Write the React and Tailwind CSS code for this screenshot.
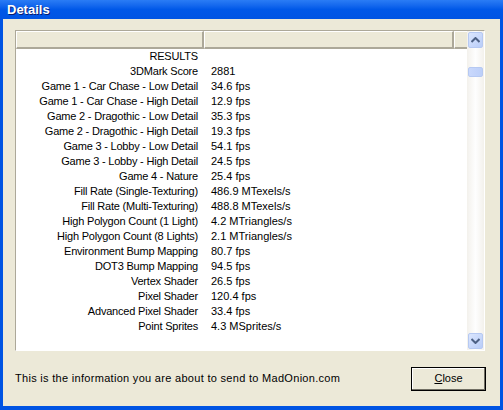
import React from "react";

const rows = [
  ["RESULTS", ""],
  ["3DMark Score", "2881"],
  ["Game 1 - Car Chase - Low Detail", "34.6 fps"],
  ["Game 1 - Car Chase - High Detail", "12.9 fps"],
  ["Game 2 - Dragothic - Low Detail", "35.3 fps"],
  ["Game 2 - Dragothic - High Detail", "19.3 fps"],
  ["Game 3 - Lobby - Low Detail", "54.1 fps"],
  ["Game 3 - Lobby - High Detail", "24.5 fps"],
  ["Game 4 - Nature", "25.4 fps"],
  ["Fill Rate (Single-Texturing)", "486.9 MTexels/s"],
  ["Fill Rate (Multi-Texturing)", "488.8 MTexels/s"],
  ["High Polygon Count (1 Light)", "4.2 MTriangles/s"],
  ["High Polygon Count (8 Lights)", "2.1 MTriangles/s"],
  ["Environment Bump Mapping", "80.7 fps"],
  ["DOT3 Bump Mapping", "94.5 fps"],
  ["Vertex Shader", "26.5 fps"],
  ["Pixel Shader", "120.4 fps"],
  ["Advanced Pixel Shader", "33.4 fps"],
  ["Point Sprites", "4.3 MSprites/s"],
];

function Arrow({ up }) {
  return (
    <svg width="9" height="6" viewBox="0 0 9 6">
      <path
        d={up ? "M0.5 5 L4.5 1 L8.5 5" : "M0.5 1 L4.5 5 L8.5 1"}
        fill="none"
        stroke="#4d6185"
        strokeWidth="2"
      />
    </svg>
  );
}

function ScrollBtn({ up }) {
  return (
    <div className="w-[15px] h-[16px] mx-auto rounded-[2px] border border-[#b6c9f2] bg-gradient-to-br from-[#dbe6fe] to-[#b9cdf8] flex items-center justify-center">
      <Arrow up={up} />
    </div>
  );
}

export default function App() {
  return (
    <div
      className="w-[503px] h-[410px] flex flex-col bg-[#0054e3] text-[11px] text-black"
      style={{ fontFamily: '"Liberation Sans", Arial, sans-serif' }}
    >
      <div className="h-[19px] shrink-0 flex items-center px-[7px] bg-gradient-to-b from-[#2a7cf5] via-[#0058e8] to-[#0054e3]">
        <span className="text-white font-bold text-[13px] [text-shadow:1px_1px_0_#0a1e6e]">
          Details
        </span>
      </div>
      <div className="flex-1 mx-[3px] mb-[4px] bg-[#ece9d8] flex flex-col pl-[12px] pt-[11px] pr-[15px]">
        <div className="w-[470px] h-[321px] border-t border-l border-[#aca899] border-r border-b border-r-white border-b-white flex">
          <div className="flex-1 flex flex-col bg-white min-w-0">
            <div className="h-[18px] flex bg-[#ece9d8] shrink-0">
              <div className="w-[188px] border-t border-l border-white border-r-2 border-b-2 border-r-[#aca899] border-b-[#aca899]" />
              <div className="w-[250px] border-t border-l border-white border-r-2 border-b-2 border-r-[#aca899] border-b-[#aca899]" />
              <div className="flex-1 border-t border-l border-white border-b-2 border-b-[#aca899]" />
            </div>
            <div className="flex flex-col">
              {rows.map(([k, v], i) => (
                <div key={i} className="h-[15px] flex items-center leading-[15px] whitespace-nowrap">
                  <div className="w-[188px] text-right pr-[6px] tracking-[-0.2px]">{k}</div>
                  <div className="pl-[7px]">{v}</div>
                </div>
              ))}
            </div>
          </div>
          <div className="w-[17px] shrink-0 bg-gradient-to-r from-[#f3f1ec] via-[#fefefe] to-[#f3f1ec] flex flex-col pt-[1px] pb-[1px] justify-between">
            <div className="flex flex-col">
              <ScrollBtn up />
              <div className="mt-[19px] w-[15px] h-[10px] mx-auto rounded-[2px] border border-[#b6c9f2] bg-gradient-to-r from-[#c9d8fc] to-[#bccff9]" />
            </div>
            <ScrollBtn />
          </div>
        </div>
        <div className="flex-1 flex items-center justify-between">
          <span className="tracking-[0.3px]">This is the information you are about to send to MadOnion.com</span>
          <button className="w-[75px] h-[24px] border border-black bg-[#ece9d8] shadow-[inset_-1px_-1px_0_#716f64,inset_1px_1px_0_#fff] mr-[-1px] text-[11px]">
            <span className="underline">C</span>lose
          </button>
        </div>
      </div>
    </div>
  );
}
